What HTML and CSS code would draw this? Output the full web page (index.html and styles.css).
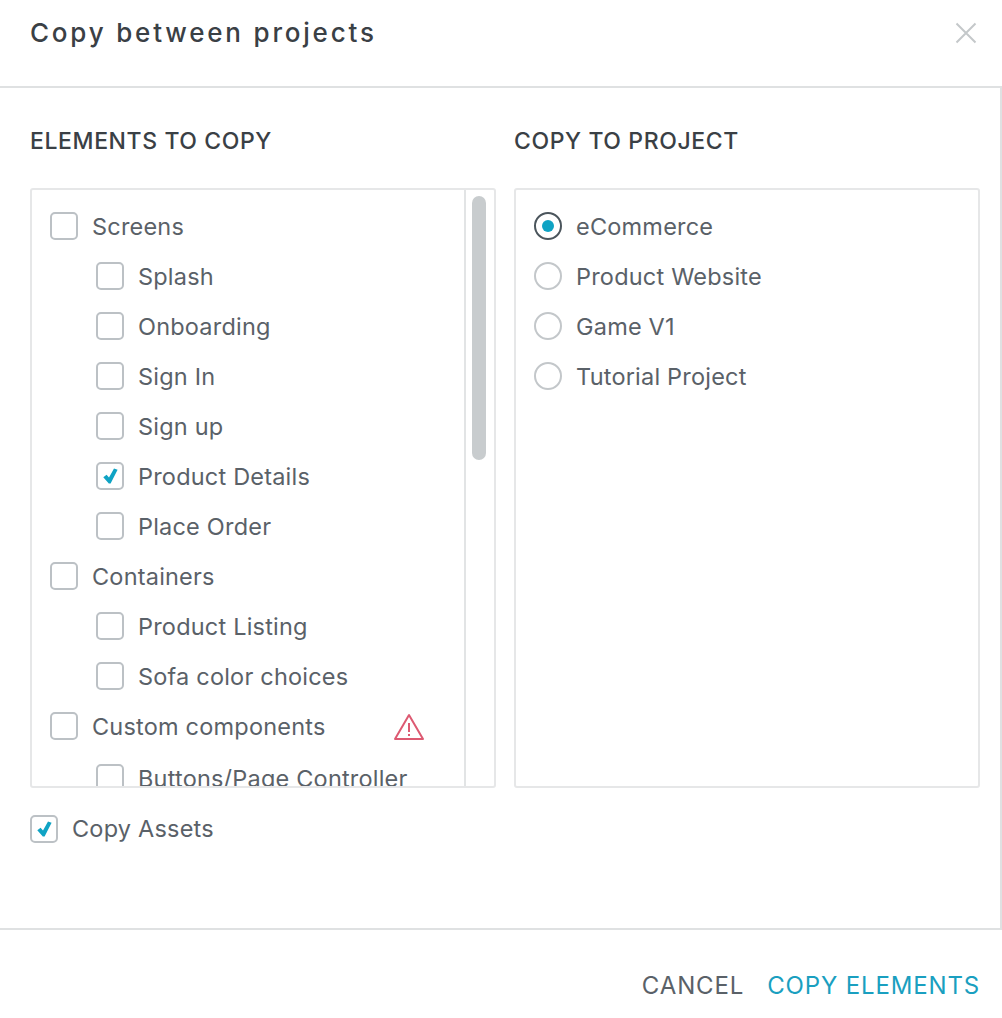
FILE: index.html
```html
<!DOCTYPE html>
<html lang="en">
<head>
<meta charset="utf-8">
<title>Copy between projects</title>
<link rel="stylesheet" href="styles.css">
</head>
<body>
<div class="dialog">
  <header class="head">
    <h1 class="title">Copy between projects</h1>
    <svg class="close" width="22" height="22" viewBox="0 0 22 22"><path d="M1.5 1.5l19 19M20.5 1.5l-19 19" stroke="#c4c8ca" stroke-width="2" fill="none"/></svg>
  </header>
  <main class="body">
    <div class="columns">
      <section class="col">
        <h2 class="label">ELEMENTS TO COPY</h2>
        <div class="panel panel-left">
          <div class="tree">
            <div class="row"><span class="box"></span><span>Screens</span></div>
            <div class="row sub"><span class="box"></span><span>Splash</span></div>
            <div class="row sub"><span class="box"></span><span>Onboarding</span></div>
            <div class="row sub"><span class="box"></span><span>Sign In</span></div>
            <div class="row sub"><span class="box"></span><span>Sign up</span></div>
            <div class="row sub"><span class="box"><svg class="tick" width="15" height="16" viewBox="0 0 15 16"><path d="M0.3 9.3L3.6 6.8L6 9.6L11 0.4L14.6 1.8L7.6 15.4H5.8Z" fill="#0fa3c4"/></svg></span><span>Product Details</span></div>
            <div class="row sub"><span class="box"></span><span>Place Order</span></div>
            <div class="row"><span class="box"></span><span>Containers</span></div>
            <div class="row sub"><span class="box"></span><span>Product Listing</span></div>
            <div class="row sub"><span class="box"></span><span>Sofa color choices</span></div>
            <div class="row"><span class="box"></span><span>Custom components</span>
              <svg class="warn" width="32" height="28" viewBox="0 0 32 28"><path d="M16 2L2 26h28z" fill="none" stroke="#dd5a72" stroke-width="2" stroke-linejoin="round"/><path d="M16 10v9M16 21v2" fill="none" stroke="#dd5a72" stroke-width="2"/></svg>
            </div>
            <div class="row sub last"><span class="box"></span><span>Buttons/Page Controller</span></div>
          </div>
          <div class="track"><div class="thumb"></div></div>
        </div>
      </section>
      <section class="col">
        <h2 class="label">COPY TO PROJECT</h2>
        <div class="panel panel-right">
          <div class="row"><span class="radio on"></span><span>eCommerce</span></div>
          <div class="row"><span class="radio"></span><span>Product Website</span></div>
          <div class="row"><span class="radio"></span><span>Game V1</span></div>
          <div class="row"><span class="radio"></span><span>Tutorial Project</span></div>
        </div>
      </section>
    </div>
    <div class="assets"><span class="box"><svg class="tick" width="15" height="16" viewBox="0 0 15 16"><path d="M0.3 9.3L3.6 6.8L6 9.6L11 0.4L14.6 1.8L7.6 15.4H5.8Z" fill="#0fa3c4"/></svg></span><span>Copy Assets</span></div>
  </main>
  <footer class="foot">
    <span class="btn">CANCEL</span>
    <span class="btn primary">COPY ELEMENTS</span>
  </footer>
</div>
</body>
</html>
```

FILE: styles.css
```css
* { box-sizing: border-box; }
html, body { margin: 0; padding: 0; background: #fff; }
body { font-family: Inter, "Liberation Sans", sans-serif; color: #555c63; overflow: hidden; }
.dialog { width: 1002px; height: 1018px; display: flex; flex-direction: column; }
.head { height: 86px; padding: 0 25px 20px 30px; display: flex; align-items: center; justify-content: space-between; flex: none; }
.title { margin: 0; font-size: 26px; font-weight: 500; letter-spacing: 2.8px; color: #3a4045; line-height: 34px; }
.close { display: block; }
.body { height: 844px; flex: none; border: 2px solid #dfe1e2; border-left: 0; padding: 39px 20px 0 30px; }
.columns { display: flex; gap: 18px; }
.col { display: flex; flex-direction: column; }
.label { margin: 0 0 33px; font-size: 23px; line-height: 28px; font-weight: 500; letter-spacing: 0.6px; color: #3a4045; }
.panel { height: 600px; border: 2px solid #e6e7e8; border-radius: 3px; overflow: hidden; }
.panel-left { width: 466px; display: flex; }
.panel-right { width: 466px; padding: 11px 0 0 18px; }
.tree { width: 434px; flex: none; padding: 11px 0 0 18px; border-right: 2px solid #e2e4e5; overflow: hidden; }
.track { flex: 1; padding: 6px 6px 0 6px; }
.thumb { width: 14px; height: 264px; border-radius: 7px; background: #c8ccce; }
.row { height: 50px; display: flex; align-items: center; gap: 14px; font-size: 23.5px; letter-spacing: 0.2px; color: #5a6168; white-space: nowrap; position: relative; }
.sub { padding-left: 46px; }
.last { margin-top: 2px; }
.box { width: 28px; height: 28px; flex: none; border: 2px solid #bcc1c5; border-radius: 5px; display: flex; align-items: center; justify-content: center; background: #fff; }
.tick { display: block; }
.warn { position: absolute; left: 343px; top: 12px; }
.radio { width: 28px; height: 28px; flex: none; border: 2px solid #c3c7ca; border-radius: 50%; display: flex; align-items: center; justify-content: center; }
.radio.on { border-color: #4b555c; }
.radio.on::after { content: ""; width: 12px; height: 12px; border-radius: 50%; background: #0fa3c4; }
.assets { display: flex; align-items: center; gap: 14px; margin-top: 26px; font-size: 23.5px; letter-spacing: 0.2px; color: #5a6168; }
.foot { flex: 1; display: flex; justify-content: flex-end; align-items: center; gap: 23px; padding: 24px 22px 2px 0; font-size: 24px; letter-spacing: 0.85px; }
.btn { color: #5a6168; }
.primary { color: #1a9fc0; }
```
